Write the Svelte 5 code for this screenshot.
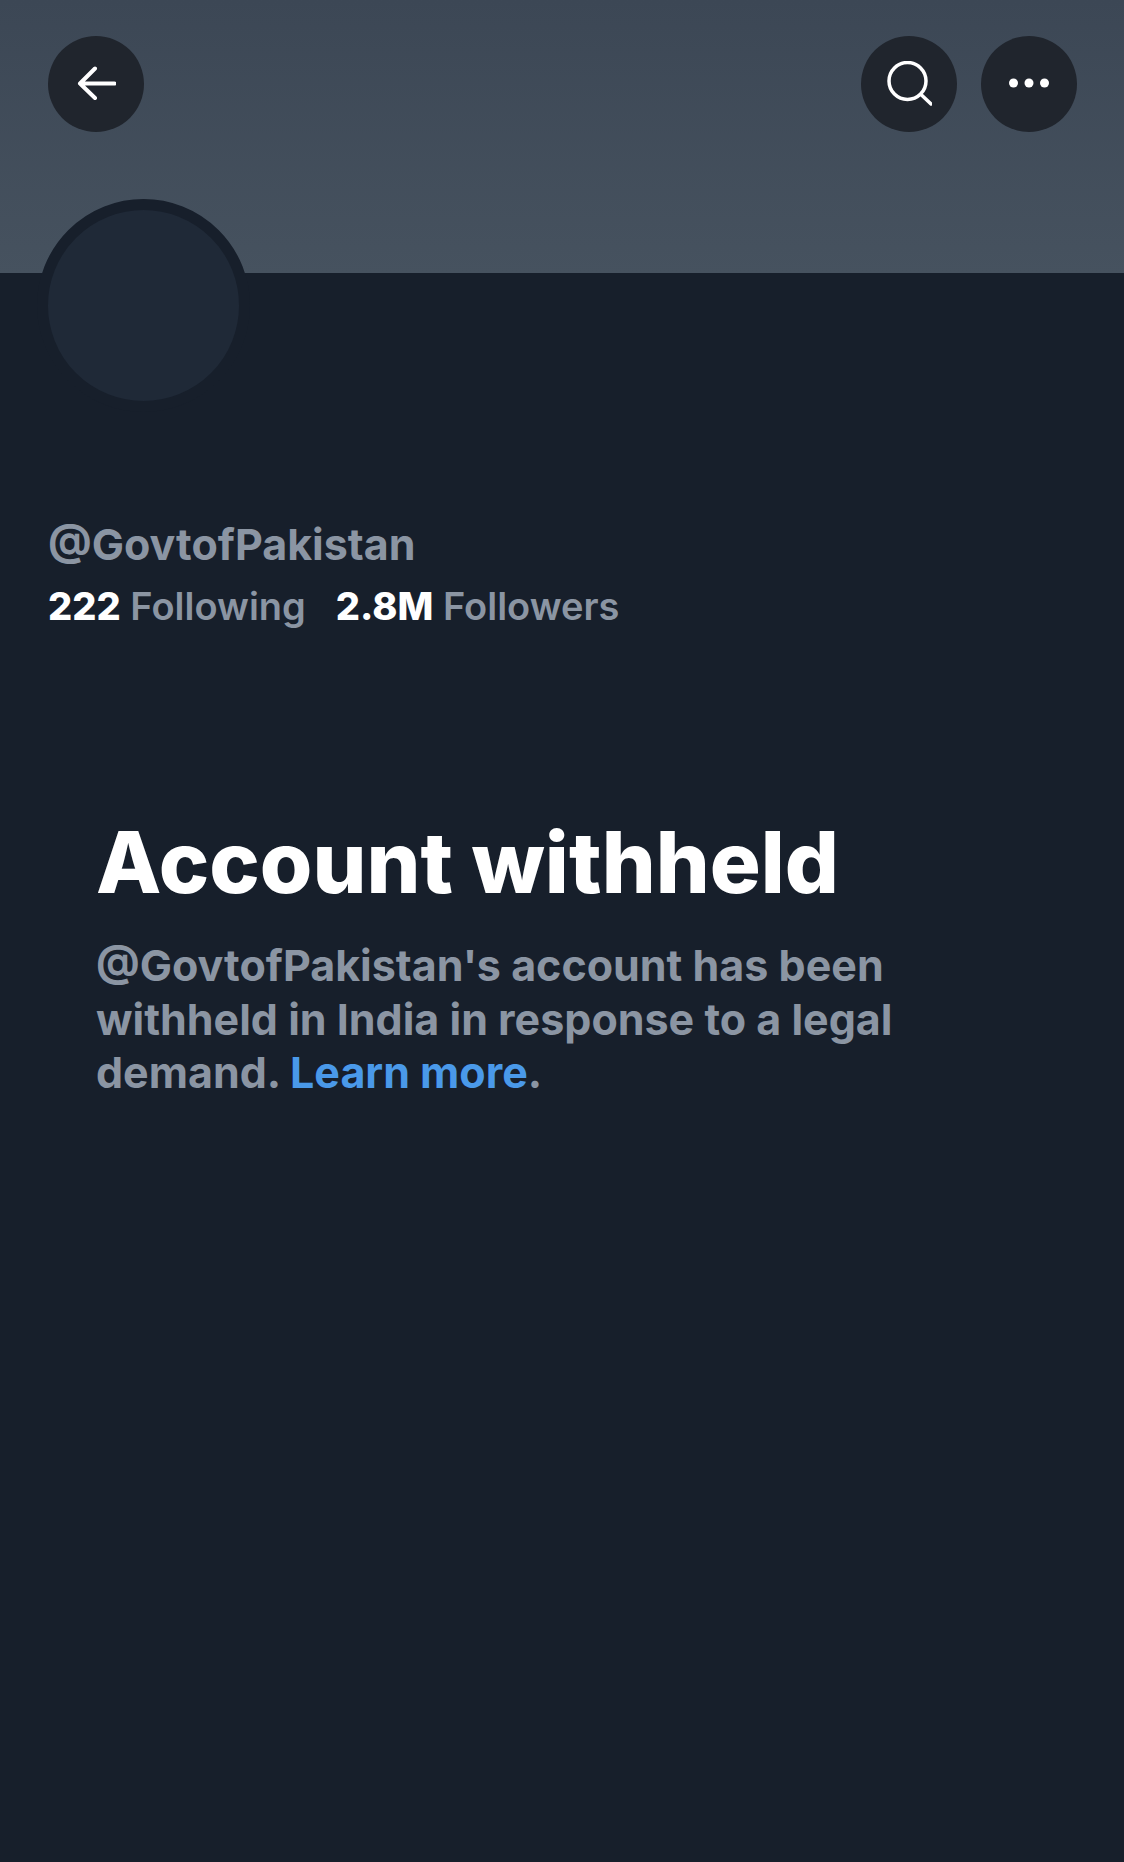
<script>
  const handle = 'GovtofPakistan';
</script>

<div class="page">
  <header class="banner">
    <button class="round" aria-label="Back">
      <svg viewBox="0 0 40 40" width="40" height="40" class="arrow"><path d="M38.500 19.500H4M19 4.500 4 19.500l15 14.500" /></svg>
    </button>
    <div class="actions">
      <button class="round" aria-label="Search">
        <svg viewBox="0 0 46 46" width="46" height="46" class="thin"><circle cx="21.500" cy="20" r="18.500" /><path d="M35 33.500 45 43" /></svg>
      </button>
      <button class="round" aria-label="More">
        <svg viewBox="0 0 42 12" width="42" height="12" class="dots"><circle cx="5.500" cy="5" r="4.500" /><circle cx="21" cy="5" r="4.500" /><circle cx="36.500" cy="5" r="4.500" /></svg>
      </button>
    </div>
  </header>

  <section class="profile">
    <div class="avatar"></div>
    <div class="handle">@{handle}</div>
    <div class="stats">
      <span><b>222</b> Following</span>
      <span><b>2.8M</b> Followers</span>
    </div>
  </section>

  <section class="notice">
    <h1>Account withheld</h1>
    <p>@{handle}'s account has been withheld in India in response to a legal demand. <a href="#learn">Learn more</a>.</p>
  </section>
</div>

<style>
  :global(body) {
    margin: 0;
    background: #171f2b;
  }
  .page {
    width: 1124px;
    height: 1862px;
    background: #171f2b;
    font-family: Inter, "Liberation Sans", sans-serif;
    overflow: hidden;
  }
  .banner {
    height: 273px;
    box-sizing: border-box;
    padding: 36px 47px 0 48px;
    display: flex;
    justify-content: space-between;
    align-items: flex-start;
    background: linear-gradient(#3c4755, #46525f);
  }
  .actions {
    display: flex;
    gap: 24px;
  }
  .round {
    width: 96px;
    height: 96px;
    padding: 0;
    border: 0;
    border-radius: 50%;
    background: #20252d;
    display: flex;
    align-items: center;
    justify-content: center;
  }
  svg {
    fill: none;
    stroke: #fff;
    stroke-width: 4;
    stroke-linecap: round;
    stroke-linejoin: round;
  }
  .thin {
    stroke-width: 3.500;
  }
  .dots {
    fill: #fff;
    stroke: none;
  }
  .profile {
    position: relative;
    padding: 246px 48px 0;
  }
  .avatar {
    position: absolute;
    left: 37px;
    top: -74px;
    width: 191px;
    height: 191px;
    border: 11px solid #171f2b;
    border-radius: 50%;
    background: #1f2937;
  }
  .handle {
    font-size: 43px;
    line-height: 50px;
    font-weight: 700;
    color: #8b95a3;
  }
  .stats {
    margin-top: 14px;
    display: flex;
    gap: 30px;
    font-size: 38px;
    line-height: 46px;
    font-weight: 600;
    color: #8b95a3;
  }
  .stats b {
    color: #fff;
    font-weight: 800;
  }
  .notice {
    padding: 186px 96px 0;
  }
  h1 {
    margin: 0;
    font-size: 85px;
    line-height: 96px;
    font-weight: 800;
    color: #fff;
  }
  p {
    margin: 28px 0 0;
    font-size: 43px;
    line-height: 53.500px;
    font-weight: 700;
    color: #8b95a3;
  }
  a {
    color: #4a99e9;
    text-decoration: none;
  }
</style>
